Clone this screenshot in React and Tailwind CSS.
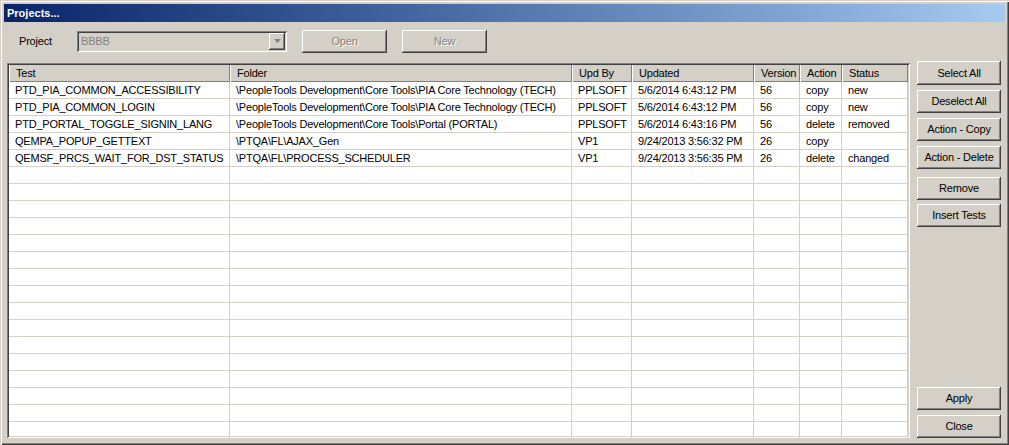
import React from "react";

const raised =
  "shadow-[inset_-1px_-1px_#404040,inset_1px_1px_#ffffff,inset_-2px_-2px_#808080,inset_2px_2px_#d4d0c8]";
const sunken =
  "shadow-[inset_1px_1px_#808080,inset_-1px_-1px_#ffffff,inset_2px_2px_#404040,inset_-2px_-2px_#d4d0c8]";

const columns = [
  { key: "test", label: "Test", w: "w-[221px]" },
  { key: "folder", label: "Folder", w: "w-[342px]" },
  { key: "by", label: "Upd By", w: "w-[60px]" },
  { key: "updated", label: "Updated", w: "w-[122px]" },
  { key: "version", label: "Version", w: "w-[46px]" },
  { key: "action", label: "Action", w: "w-[42px]" },
  { key: "status", label: "Status", w: "w-[66px]" },
];

const rows = [
  {
    test: "PTD_PIA_COMMON_ACCESSIBILITY",
    folder: "\\PeopleTools Development\\Core Tools\\PIA Core Technology (TECH)",
    by: "PPLSOFT",
    updated: "5/6/2014 6:43:12 PM",
    version: "56",
    action: "copy",
    status: "new",
  },
  {
    test: "PTD_PIA_COMMON_LOGIN",
    folder: "\\PeopleTools Development\\Core Tools\\PIA Core Technology (TECH)",
    by: "PPLSOFT",
    updated: "5/6/2014 6:43:12 PM",
    version: "56",
    action: "copy",
    status: "new",
  },
  {
    test: "PTD_PORTAL_TOGGLE_SIGNIN_LANG",
    folder: "\\PeopleTools Development\\Core Tools\\Portal (PORTAL)",
    by: "PPLSOFT",
    updated: "5/6/2014 6:43:16 PM",
    version: "56",
    action: "delete",
    status: "removed",
  },
  {
    test: "QEMPA_POPUP_GETTEXT",
    folder: "\\PTQA\\FL\\AJAX_Gen",
    by: "VP1",
    updated: "9/24/2013 3:56:32 PM",
    version: "26",
    action: "copy",
    status: "",
  },
  {
    test: "QEMSF_PRCS_WAIT_FOR_DST_STATUS",
    folder: "\\PTQA\\FL\\PROCESS_SCHEDULER",
    by: "VP1",
    updated: "9/24/2013 3:56:35 PM",
    version: "26",
    action: "delete",
    status: "changed",
  },
];

const allRows = [...rows, ...Array.from({ length: 16 }, () => ({}))];

function Button({ text, disabled, className = "" }) {
  return (
    <div
      className={`flex items-center justify-center bg-[#d4d0c8] ${raised} ${
        disabled ? "text-[#808080] [text-shadow:1px_1px_#ffffff]" : "text-black"
      } ${className}`}
    >
      {text}
    </div>
  );
}

export default function App() {
  return (
    <div className="w-[1009px] h-[445px] bg-[#d4d0c8] p-[4px] pb-0 text-[11px] tracking-[-0.2px] font-['Liberation_Sans',Arial,sans-serif] text-black shadow-[inset_1px_1px_#d4d0c8,inset_2px_2px_#ffffff,inset_-1px_-1px_#404040,inset_-2px_-2px_#808080] overflow-hidden">
      {/* TITLE BAR */}
      <div className="h-[18px] w-[1001px] bg-gradient-to-r from-[#0a246a] to-[#a6caf0] flex items-center pl-[3px] text-white font-bold tracking-normal">
        Projects...
      </div>

      {/* TOOLBAR */}
      <div className="flex items-center h-[24px] mt-[7px]">
        <span className="ml-[15px] w-[58px]">Project</span>
        <div
          className={`relative w-[210px] h-[21px] bg-[#d4d0c8] ${sunken} flex items-center pl-[4px] text-[#808080]`}
        >
          BBBB
          <div
            className={`absolute right-[2px] top-[2px] w-[16px] h-[17px] ${raised} flex items-center justify-center`}
          >
            <svg width="7" height="4" viewBox="0 0 7 4">
              <path d="M0 0h7L3.5 4z" fill="#808080" />
            </svg>
          </div>
        </div>
        <Button text="Open" disabled className="ml-[15px] w-[85px] h-[23px]" />
        <Button text="New" disabled className="ml-[15px] w-[85px] h-[23px]" />
      </div>

      {/* MAIN */}
      <div className="flex mt-[9px]">
        {/* GRID */}
        <div
          className={`ml-[3px] mt-[1px] w-[903px] h-[375px] bg-white ${sunken} p-[2px] overflow-hidden`}
        >
          <div className="flex h-[17px] bg-[#d4d0c8]">
            {columns.map((c) => (
              <div
                key={c.key}
                className={`${c.w} shrink-0 pl-[6px] flex items-center border-l border-l-white border-r border-r-[#808080] shadow-[inset_0_-1px_#808080] whitespace-nowrap`}
              >
                {c.label}
              </div>
            ))}
          </div>
          {allRows.map((r, i) => (
            <div key={i} className="flex h-[17px] border-b border-[#d4d0c8]">
              {columns.map((c) => (
                <div
                  key={c.key}
                  className={`${c.w} shrink-0 pl-[6px] pt-[1px] flex items-center border-r border-[#d4d0c8] whitespace-nowrap overflow-hidden`}
                >
                  {r[c.key] || ""}
                </div>
              ))}
            </div>
          ))}
        </div>

        {/* SIDE BUTTONS */}
        <div className="ml-[7px] flex flex-col w-[84px] h-[376px]">
          <Button text="Select All" className="h-[24px] mt-[-1px]" />
          <Button text="Deselect All" className="h-[23px] mt-[5px]" />
          <Button text="Action - Copy" className="h-[23px] mt-[5px]" />
          <Button text="Action - Delete" className="h-[23px] mt-[5px]" />
          <Button text="Remove" className="h-[23px] mt-[8px]" />
          <Button text="Insert Tests" className="h-[23px] mt-[4px]" />
          <div className="flex-1" />
          <Button text="Apply" className="h-[23px]" />
          <Button text="Close" className="h-[23px] mt-[5px]" />
        </div>
      </div>
    </div>
  );
}
